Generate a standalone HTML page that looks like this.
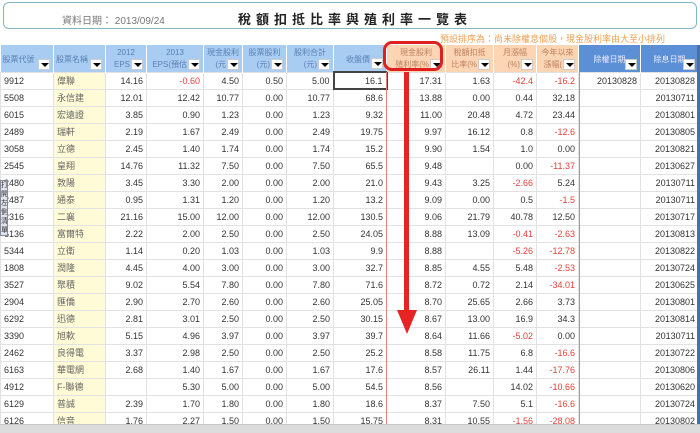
<!DOCTYPE html>
<html><head><meta charset="utf-8">
<style>
*{margin:0;padding:0;box-sizing:border-box}
body{width:700px;height:433px;overflow:hidden;background:#fff;font-family:"Liberation Sans","Noto Sans CJK TC",sans-serif;position:relative}
.tb{position:absolute;left:3px;top:2px;width:694px;height:27px;border:1px solid #7fb9c2;border-radius:6px}
.date{position:absolute;left:58px;top:9px;font-size:10px;color:#777}
.title{position:absolute;left:234px;top:6px;font-size:13px;font-weight:bold;letter-spacing:5px;color:#222}
.note{position:absolute;left:440px;top:32px;font-size:9px;color:#f0a050;white-space:nowrap}
table{position:absolute;left:0;top:45px;border-collapse:collapse;table-layout:fixed;width:698px}
td{height:17px;font-size:9px;color:#333;text-align:right;padding-right:3px;border:1px solid #e2e2e2;white-space:nowrap;overflow:hidden}
td.l{text-align:left;padding-left:3px}
td.n{background:#fffbd6;color:#666}
td.r{color:#e8403a}
th{height:27px;font-weight:normal;font-size:8px;color:#5a7fb5;background:#a9cdf2;border-right:1px solid #fff;position:relative;text-align:center;vertical-align:top;padding-top:2px;line-height:12px}
th.o{background:#fcd5b4;color:#c08060}
th.d{background:#5b8fd6;color:#eef}
th .s{display:block;text-align:right;padding-right:16px}
th .b{position:absolute;right:3px;bottom:2px;width:12px;height:11px;background:#fff;border:1px solid #ccc}
th .b:after{content:"";position:absolute;left:2px;top:3px;border-left:4px solid transparent;border-right:4px solid transparent;border-top:4px solid #000}
.pl{position:absolute;top:72px;width:1px;height:352px;background:#e08080}
.sb{position:absolute;left:0;top:424px;width:700px;height:9px;background:#dcdcdc;border-top:1px solid #c8c8c8}
.tab{position:absolute;left:0;top:180px;width:8px;height:56px;background:#dde4ee;border:1px solid #889;font-size:7px;line-height:9px;color:#333;text-align:center;overflow:hidden}
</style></head><body>
<div class="tb"><span class="date">資料日期： 2013/09/24</span><span class="title">稅額扣抵比率與殖利率一覽表</span></div>
<div class="note">預設排序為：尚未除權息個股，現金股利率由大至小排列</div>
<table>
<colgroup><col style="width:53px"><col style="width:52px"><col style="width:41px"><col style="width:57px"><col style="width:39px"><col style="width:44px"><col style="width:47px"><col style="width:53px"><col style="width:59px"><col style="width:48px"><col style="width:43px"><col style="width:42px"><col style="width:62px"><col style="width:58px"></colgroup>
<tr>
<th style="text-align:left;padding-left:2px;padding-top:9px">股票代號<i class="b"></i></th>
<th style="text-align:left;padding-left:2px;padding-top:9px">股票名稱<i class="b"></i></th>
<th>2012<span class="s">EPS</span><i class="b"></i></th>
<th>2013<span class="s">EPS(預估</span><i class="b"></i></th>
<th>現金股利<span class="s">(元</span><i class="b"></i></th>
<th>股票股利<span class="s">(元)</span><i class="b"></i></th>
<th>股利合計<span class="s">(元)</span><i class="b"></i></th>
<th style="padding-top:9px;text-align:right;padding-right:16px">收盤價<i class="b"></i></th>
<th class="o">現金股利<span class="s">殖利率(%</span><i class="b"></i></th>
<th class="o">稅額扣抵<span class="s">比率(%</span><i class="b"></i></th>
<th class="o">月漲幅<span class="s">(%)</span><i class="b"></i></th>
<th class="o">今年以來<span class="s">漲幅(</span><i class="b"></i></th>
<th class="d" style="padding-top:9px">除權日期<i class="b"></i></th>
<th class="d" style="padding-top:9px">除息日期<i class="b"></i></th>
</tr>
<tr><td class="l">9912</td><td class="l n">偉聯</td><td>14.16</td><td class="r">-0.60</td><td>4.50</td><td>0.50</td><td>5.00</td><td style="border:2px solid #444">16.1</td><td>17.31</td><td>1.63</td><td class="r">-42.4</td><td class="r">-16.2</td><td>20130828</td><td>20130828</td></tr>
<tr><td class="l">5508</td><td class="l n">永信建</td><td>12.01</td><td>12.42</td><td>10.77</td><td>0.00</td><td>10.77</td><td>68.6</td><td>13.88</td><td>0.00</td><td>0.44</td><td>32.18</td><td></td><td>20130711</td></tr>
<tr><td class="l">6015</td><td class="l n">宏遠證</td><td>3.85</td><td>0.90</td><td>1.23</td><td>0.00</td><td>1.23</td><td>9.32</td><td>11.00</td><td>20.48</td><td>4.72</td><td>23.44</td><td></td><td>20130801</td></tr>
<tr><td class="l">2489</td><td class="l n">瑞軒</td><td>2.19</td><td>1.67</td><td>2.49</td><td>0.00</td><td>2.49</td><td>19.75</td><td>9.97</td><td>16.12</td><td>0.8</td><td class="r">-12.6</td><td></td><td>20130805</td></tr>
<tr><td class="l">3058</td><td class="l n">立德</td><td>2.45</td><td>1.40</td><td>1.74</td><td>0.00</td><td>1.74</td><td>15.2</td><td>9.90</td><td>1.54</td><td>1.0</td><td>0.00</td><td></td><td>20130821</td></tr>
<tr><td class="l">2545</td><td class="l n">皇翔</td><td>14.76</td><td>11.32</td><td>7.50</td><td>0.00</td><td>7.50</td><td>65.5</td><td>9.48</td><td></td><td>0.00</td><td class="r">-11.37</td><td></td><td>20130627</td></tr>
<tr><td class="l">2480</td><td class="l n">敦陽</td><td>3.45</td><td>3.30</td><td>2.00</td><td>0.00</td><td>2.00</td><td>21.0</td><td>9.43</td><td>3.25</td><td class="r">-2.66</td><td>5.24</td><td></td><td>20130711</td></tr>
<tr><td class="l">2487</td><td class="l n">通泰</td><td>0.95</td><td>1.31</td><td>1.20</td><td>0.00</td><td>1.20</td><td>13.2</td><td>9.09</td><td>0.00</td><td>0.5</td><td class="r">-1.5</td><td></td><td>20130711</td></tr>
<tr><td class="l">2316</td><td class="l n">二襄</td><td>21.16</td><td>15.00</td><td>12.00</td><td>0.00</td><td>12.00</td><td>130.5</td><td>9.06</td><td>21.79</td><td>40.78</td><td>12.50</td><td></td><td>20130717</td></tr>
<tr><td class="l">6136</td><td class="l n">富爾特</td><td>2.22</td><td>2.00</td><td>2.50</td><td>0.00</td><td>2.50</td><td>24.05</td><td>8.88</td><td>13.09</td><td class="r">-0.41</td><td class="r">-2.63</td><td></td><td>20130813</td></tr>
<tr><td class="l">5344</td><td class="l n">立衛</td><td>1.14</td><td>0.20</td><td>1.03</td><td>0.00</td><td>1.03</td><td>9.9</td><td>8.88</td><td></td><td class="r">-5.26</td><td class="r">-12.78</td><td></td><td>20130822</td></tr>
<tr><td class="l">1808</td><td class="l n">潤隆</td><td>4.45</td><td>4.00</td><td>3.00</td><td>0.00</td><td>3.00</td><td>32.7</td><td>8.85</td><td>4.55</td><td>5.48</td><td class="r">-2.53</td><td></td><td>20130724</td></tr>
<tr><td class="l">3527</td><td class="l n">聚積</td><td>9.02</td><td>5.54</td><td>7.80</td><td>0.00</td><td>7.80</td><td>71.6</td><td>8.72</td><td>0.72</td><td>2.14</td><td class="r">-34.01</td><td></td><td>20130625</td></tr>
<tr><td class="l">2904</td><td class="l n">匯僑</td><td>2.90</td><td>2.70</td><td>2.60</td><td>0.00</td><td>2.60</td><td>25.05</td><td>8.70</td><td>25.65</td><td>2.66</td><td>3.73</td><td></td><td>20130801</td></tr>
<tr><td class="l">6292</td><td class="l n">迅德</td><td>2.81</td><td>3.01</td><td>2.50</td><td>0.00</td><td>2.50</td><td>30.15</td><td>8.67</td><td>13.00</td><td>16.9</td><td>34.3</td><td></td><td>20130814</td></tr>
<tr><td class="l">3390</td><td class="l n">旭軟</td><td>5.15</td><td>4.96</td><td>3.97</td><td>0.00</td><td>3.97</td><td>39.7</td><td>8.64</td><td>11.66</td><td class="r">-5.02</td><td>0.00</td><td></td><td>20130711</td></tr>
<tr><td class="l">2462</td><td class="l n">良得電</td><td>3.37</td><td>2.98</td><td>2.50</td><td>0.00</td><td>2.50</td><td>25.2</td><td>8.58</td><td>11.75</td><td>6.8</td><td class="r">-16.6</td><td></td><td>20130722</td></tr>
<tr><td class="l">6163</td><td class="l n">華電網</td><td>2.68</td><td>1.40</td><td>1.67</td><td>0.00</td><td>1.67</td><td>17.6</td><td>8.57</td><td>26.11</td><td>1.44</td><td class="r">-17.76</td><td></td><td>20130806</td></tr>
<tr><td class="l">4912</td><td class="l n">F-聯德</td><td></td><td>5.30</td><td>5.00</td><td>0.00</td><td>5.00</td><td>54.5</td><td>8.56</td><td></td><td>14.02</td><td class="r">-10.66</td><td></td><td>20130620</td></tr>
<tr><td class="l">6129</td><td class="l n">普誠</td><td>2.39</td><td>1.70</td><td>1.80</td><td>0.00</td><td>1.80</td><td>18.6</td><td>8.37</td><td>7.50</td><td>5.1</td><td class="r">-16.6</td><td></td><td>20130724</td></tr>
<tr><td class="l">6126</td><td class="l n">信音</td><td>1.76</td><td>2.27</td><td>1.50</td><td>0.00</td><td>1.50</td><td>15.75</td><td>8.31</td><td>10.55</td><td class="r">-1.56</td><td class="r">-28.08</td><td></td><td>20130802</td></tr>
</table>
<div class="pl" style="left:386px"></div>
<div class="pl" style="left:579px"></div>
<div style="position:absolute;left:697px;top:45px;width:3px;height:380px;background:#4a6fa8"></div>
<div style="position:absolute;left:383px;top:41px;width:60px;height:30px;border:3px solid #e02020;border-radius:9px"></div>
<div style="position:absolute;left:404px;top:72px;width:5px;height:240px;background:#e52525"></div>
<div style="position:absolute;left:397px;top:310px;border-left:10px solid transparent;border-right:10px solid transparent;border-top:24px solid #e52525"></div>
<div class="tab">打開左側清單</div>
<div class="sb"></div>
</body></html>
